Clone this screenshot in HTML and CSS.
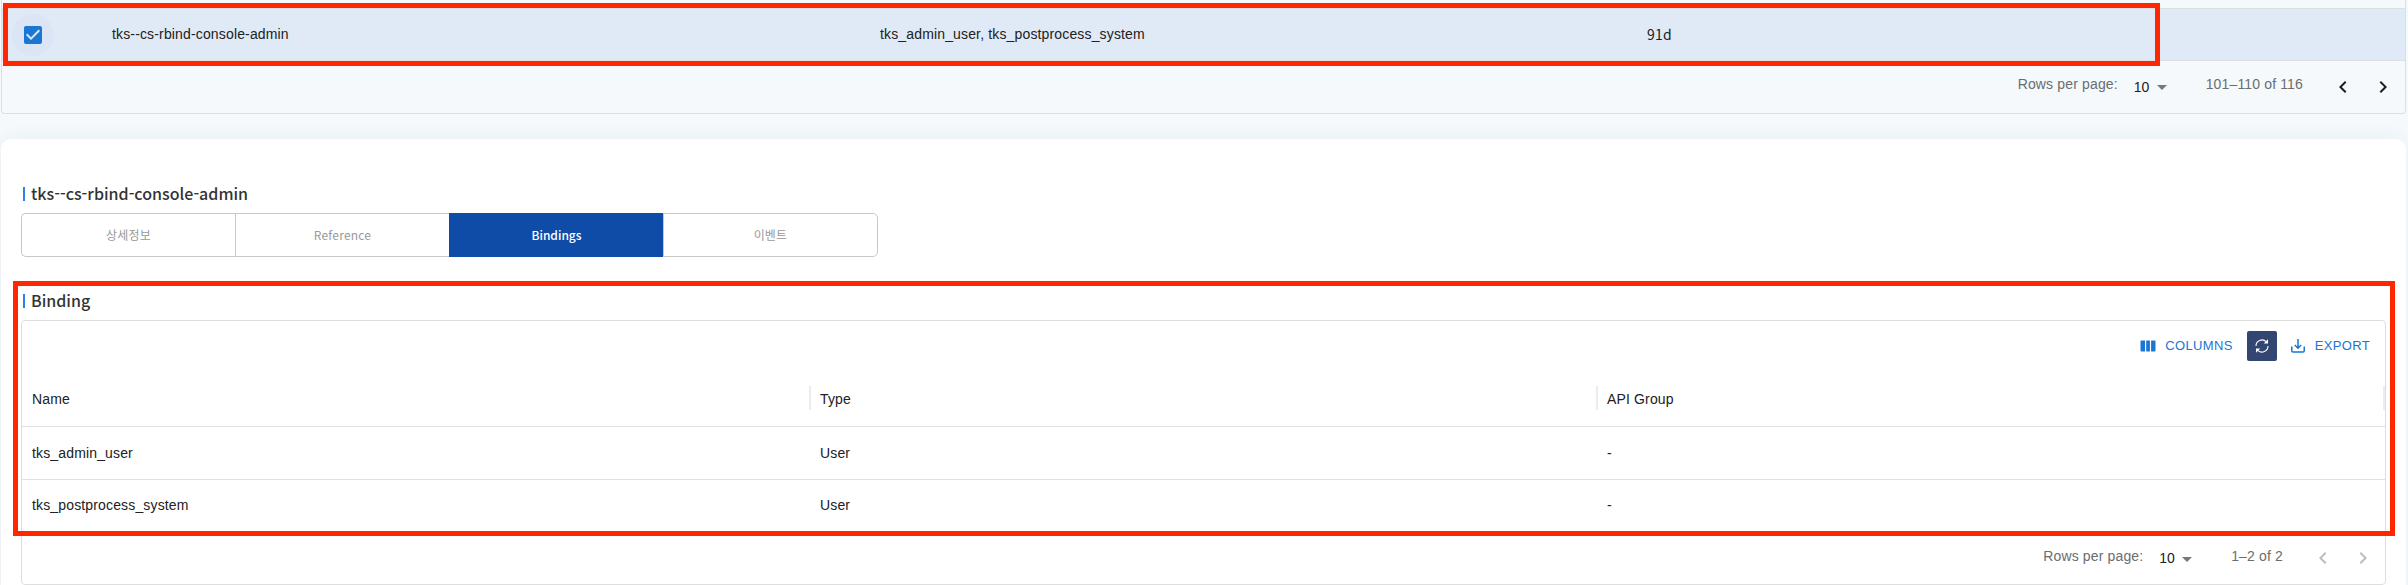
FILE: index.html
```html
<!DOCTYPE html>
<html lang="ko">
<head>
<meta charset="utf-8">
<title>Bindings</title>
<link rel="stylesheet" href="styles.css">
</head>
<body>
<main class="page">
  <section class="list">
    <div class="list-row">
      <span class="check-halo">
        <svg width="24" height="24" viewBox="0 0 24 24"><path fill="#1976d2" d="M19 3H5c-1.11 0-2 .9-2 2v14c0 1.1.89 2 2 2h14c1.11 0 2-.9 2-2V5c0-1.1-.89-2-2-2zm-9 14l-5-5 1.41-1.41L10 14.17l7.59-7.59L19 8l-9 9z"/></svg>
      </span>
      <span class="list-name">tks--cs-rbind-console-admin</span>
      <span class="list-users">tks_admin_user, tks_postprocess_system</span>
      <span class="list-age">91d</span>
    </div>
    <div class="pager pager-top">
      <span class="pager-label">Rows per page:</span>
      <span class="pager-size">10</span>
      <svg class="caret" width="10" height="5" viewBox="0 0 10 5"><path d="M0 0h10L5 5z"/></svg>
      <span class="pager-range">101–110 of 116</span>
      <svg class="chev" width="24" height="24" viewBox="0 0 24 24"><path d="M15.41 7.41L14 6l-6 6 6 6 1.41-1.41L10.83 12z"/></svg>
      <svg class="chev" width="24" height="24" viewBox="0 0 24 24"><path d="M10 6L8.59 7.41 13.17 12l-4.58 4.59L10 18l6-6z"/></svg>
    </div>
  </section>

  <section class="card">
    <h2 class="title">tks--cs-rbind-console-admin</h2>
    <nav class="tabs">
      <button class="tab">상세정보</button>
      <button class="tab">Reference</button>
      <button class="tab tab-active">Bindings</button>
      <button class="tab">이벤트</button>
    </nav>
    <h2 class="title title-binding">Binding</h2>
    <div class="grid">
      <div class="toolbar">
        <svg class="tool-icon" width="20" height="20" viewBox="0 0 20 20" fill="#1976d2"><path d="M3.500 4.500H7v11H3.500a1 1 0 0 1-1-1v-9a1 1 0 0 1 1-1zM8.200 4.500h3.700v11H8.200zM13.100 4.500h3.400a1 1 0 0 1 1 1v9a1 1 0 0 1-1 1h-3.400z"/></svg>
        <span class="tool-text columns">COLUMNS</span>
        <button class="refresh">
          <svg width="14" height="14" viewBox="0 0 14 14" fill="none" stroke="#fff" stroke-width="1.1"><path d="M1 7A6 6 0 0 1 11.200 2.700M13 7A6 6 0 0 1 2.800 11.300"/><path fill="#fff" stroke="none" d="M13 .3v4.300H8.800zM1 13.700V9.400h4.200z"/></svg>
        </button>
        <svg class="export-icon" width="14" height="14" viewBox="0 0 14 14" fill="none" stroke="#1976d2" stroke-width="1.500"><path d="M.75 7.500v4.250a1.300 1.300 0 0 0 1.300 1.300h9.900a1.300 1.300 0 0 0 1.300-1.300V7.500M7 0v9M3.800 6L7 9.200 10.200 6"/></svg>
        <span class="tool-text">EXPORT</span>
      </div>
      <div class="row head"><span class="cell">Name</span><span class="cell">Type</span><span class="cell">API Group</span></div>
      <div class="row"><span class="cell">tks_admin_user</span><span class="cell">User</span><span class="cell">-</span></div>
      <div class="row row-last"><span class="cell">tks_postprocess_system</span><span class="cell">User</span><span class="cell">-</span></div>
      <div class="pager pager-off">
        <span class="pager-label">Rows per page:</span>
        <span class="pager-size">10</span>
        <svg class="caret" width="10" height="5" viewBox="0 0 10 5"><path d="M0 0h10L5 5z"/></svg>
        <span class="pager-range">1–2 of 2</span>
        <svg class="chev" width="24" height="24" viewBox="0 0 24 24"><path d="M15.41 7.41L14 6l-6 6 6 6 1.41-1.41L10.83 12z"/></svg>
        <svg class="chev" width="24" height="24" viewBox="0 0 24 24"><path d="M10 6L8.59 7.41 13.17 12l-4.58 4.59L10 18l6-6z"/></svg>
      </div>
    </div>
  </section>
  <div class="mark mark-list"></div>
  <div class="mark mark-grid"></div>
</main>
</body>
</html>
```
FILE: styles.css
```css
* { box-sizing: border-box; }
body {
  margin: 0;
  background: #f5f9fc;
  color: #212121;
  font: 14px/20px "Liberation Sans", Arial, sans-serif;
  letter-spacing: 0.15px;
}
.page {
  position: relative;
  height: 585px;
  padding: 0 2px 0 1px;
  overflow: hidden;
}
.list {
  height: 114px;
  padding-top: 8px;
  border: 1px solid #dadfe2;
  border-top: 0;
  border-radius: 0 0 4px 4px;
}
.list-row {
  display: grid;
  grid-template-columns: 110px 768px 767px 1fr;
  align-items: center;
  height: 53px;
  border-top: 1px solid #dcdfe3;
  border-bottom: 1px solid #dcdfe3;
  background: #e0eaf6;
}
.list-name, .list-users { padding-bottom: 2px; }
.check-halo {
  display: flex;
  align-items: center;
  justify-content: center;
  width: 42px;
  height: 42px;
  margin-left: 10px;
  border-radius: 50%;
  background: #dce5f5;
}
.list-age { font-family: "Noto Sans CJK KR", sans-serif; letter-spacing: 0.2px; padding-bottom: 1px; }
.pager {
  display: flex;
  align-items: center;
  justify-content: flex-end;
  height: 52px;
  padding-right: 10px;
}
.pager-label, .pager-range { color: #6b6d6f; margin-bottom: 4px; }
.pager-top { height: 51px; }
.pager-top .pager-label, .pager-top .pager-range { margin-bottom: 5px; }
.pager-label { width: 99px; margin-right: 17px; white-space: nowrap; }
.pager-size { width: 16px; margin-right: 7px; }
.caret { fill: #757779; margin: 2px 39px 0 0; }
.pager-range { margin-right: 28px; }
.chev { fill: #1b1d1f; }
.chev + .chev { margin-left: 16px; }
.pager-off .chev { fill: #bdbdbd; }

.card {
  height: 460px;
  margin-top: 25px;
  padding: 39px 20px 0;
  border-radius: 10px 10px 0 0;
  background: #fff;
  box-shadow: 0 0 20px rgba(40, 60, 80, 0.06);
}
.title {
  display: flex;
  align-items: center;
  height: 30px;
  margin: 0;
  color: #333;
  font: 500 16px/28px "Noto Sans CJK KR", sans-serif;
  letter-spacing: 0;
}
.title::before {
  content: "";
  width: 2px;
  height: 14px;
  margin: 2px 6px 0 2px;
  background: #2f80ed;
}
.tabs {
  display: flex;
  width: 857px;
  height: 44px;
  margin-top: 5px;
}
.tab {
  flex: 1;
  padding: 0;
  border: 1px solid #c8c8c8;
  border-right: 0;
  background: #fff;
  color: #999;
  font: 12px/20px "Noto Sans CJK KR", sans-serif;
  letter-spacing: 0.2px;
}
.tab:first-child { border-radius: 5px 0 0 5px; }
.tab:last-child { border-right: 1px solid #c8c8c8; border-radius: 0 5px 5px 0; }
.tab-active {
  border-color: #0f4ca8;
  background: #0f4ca8;
  color: #fff;
  font-weight: 500;
  letter-spacing: 0;
}
.title-binding { margin-top: 28px; }
.grid {
  height: 265px;
  margin-top: 5px;
  border: 1px solid #dedede;
  border-radius: 4px;
}
.toolbar {
  display: flex;
  align-items: center;
  justify-content: flex-end;
  height: 49px;
  padding-right: 15px;
}
.tool-text { color: #1976d2; font-size: 13px; letter-spacing: 0.35px; }
.tool-icon { margin-right: 7px; }
.columns { margin-right: 14px; }
.refresh {
  display: flex;
  align-items: center;
  justify-content: center;
  width: 30px;
  height: 30px;
  padding: 0;
  border: 0;
  border-radius: 2px;
  background: #334671;
}
.export-icon { margin: 0 10px 0 14px; }
.row {
  display: grid;
  grid-template-columns: 789px 787px 1fr;
  align-items: center;
  height: 53px;
  border-bottom: 1px solid #e0e0e0;
}
.cell { padding-left: 10px; }
.cell:nth-child(2), .cell:nth-child(3) { padding-left: 9px; }
.row.head { height: 57px; }
.head .cell { height: 24px; line-height: 26px; border-right: 2px solid #ececec; }
.row-last .cell { padding-bottom: 2px; }
.pager-off { margin-top: -1px; padding-right: 10px; }

.mark { position: absolute; border: 5px solid #ff2600; pointer-events: none; }
.mark-list { left: 3px; top: 3px; width: 2157px; height: 63px; }
.mark-grid { left: 13px; top: 281px; width: 2382px; height: 255px; }
```
